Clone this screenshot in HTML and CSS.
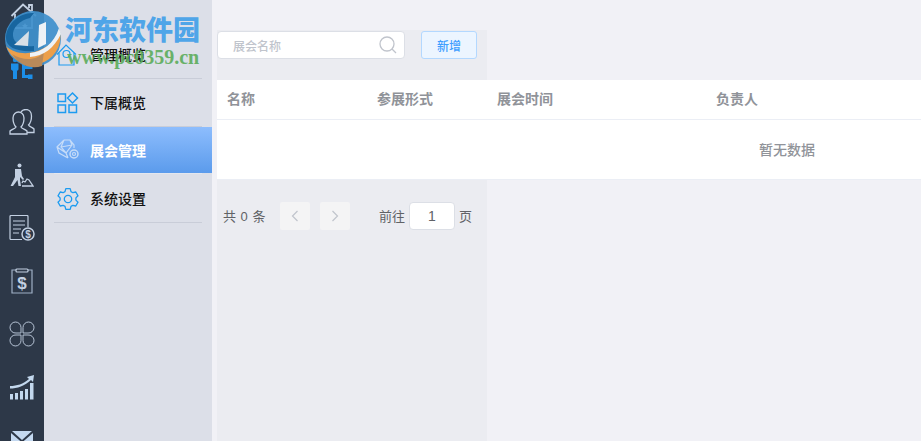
FILE: index.html
```html
<!DOCTYPE html>
<html lang="zh">
<head>
<meta charset="utf-8">
<title>展会管理</title>
<link rel="stylesheet" href="styles.css">
</head>
<body>
<div class="app">
  <nav class="rail">
    <div class="rail-cell"><svg class="home" width="30" height="30" viewBox="0 0 30 30" fill="none" stroke="#c3d0e2" stroke-width="1.800"><path d="M1.500 15 13 3.500 26 15"/><path d="M5 13v14h17V13"/><path d="M19 7V4h3v6"/><path d="m15 22 1 2 2 .2-1.500 1.300.5 2-2-1-2 1 .5-2L12 24.200l2-.2z" fill="#fff" stroke="none"/></svg></div>
    <div class="rail-cell"><svg width="24" height="24" viewBox="0 0 24 24" fill="#1c8ee8"><circle cx="5" cy="3" r="2.200"/><path d="M1 6.500h7.500v6L7 14v8H3v-8l-2-1.500z"/><path d="M12 3h3v6h4v3h-4v6h4v3h-7z"/><rect x="18" y="7.500" width="4.500" height="4.500"/><rect x="18" y="17.500" width="4.500" height="4.500"/><rect x="18" y="1" width="4" height="4"/></svg></div>
    <div class="rail-cell"><svg width="26" height="26" viewBox="0 0 26 26" fill="none" stroke="#c3d0e2" stroke-width="1.300"><path d="M1 25h17v-3c-2-2-5-2-6-4 3-3 3-6 3-9 0-4-3-6-5.500-6S4 5 4 9c0 3 0 6 3 9-1 2-4 2-6 4z"/><path d="M12 3c1-2 3-2.500 5-2.500 3 0 5.500 2.500 5.500 6.500 0 3 0 6-3 9 1 2 4 2 5.500 4v3.500H18"/></svg></div>
    <div class="rail-cell"><svg width="24" height="24" viewBox="0 0 24 24" fill="none" stroke="#c3d0e2" stroke-width="1.300"><circle cx="9.500" cy="2.500" r="2" fill="#c3d0e2" stroke="none"/><path d="M5 6h6l1 7 2 3-1 1-3-3v3l1 6H8.500l-1-6L3 23H.5L5 14z" fill="#c3d0e2" stroke="none"/><path d="M12 23h11l-4-6-2-1-2 3-2-1-1 2"/></svg></div>
    <div class="rail-cell"><svg width="26" height="26" viewBox="0 0 26 26" fill="none" stroke="#c3d0e2" stroke-width="1.200"><path d="M13 24.500H2a1 1 0 0 1-1-1V1.500a1 1 0 0 1 1-1h16a1 1 0 0 1 1 1V12"/><path d="M4 6h12M4 10h12M4 14h8M4 18h6"/><circle cx="19" cy="19" r="6" stroke-width="1.500"/><text class="dollar small" x="19" y="22.500" text-anchor="middle">$</text></svg></div>
    <div class="rail-cell"><svg width="24" height="26" viewBox="0 0 24 26" fill="none" stroke="#9fb0c6" stroke-width="1.200"><path d="M6 2H2v23h20V2h-4"/><rect x="6" y="1" width="12" height="3" rx="1" stroke="#c3d0e2"/><text class="dollar" x="12" y="20.500" text-anchor="middle">$</text></svg></div>
    <div class="rail-cell"><svg width="26" height="26" viewBox="0 0 26 26" fill="none" stroke="#c3d0e2" stroke-width=".9"><path d="M12 12H7a5.500 5.500 0 1 1 5-5.500z"/><path d="M14 12h5a5.500 5.500 0 1 0-5-5.500z"/><path d="M12 14H7a5.500 5.500 0 1 0 5 5.500z"/><path d="M14 14h5a5.500 5.500 0 1 1-5 5.500z"/></svg></div>
    <div class="rail-cell"><svg width="26" height="26" viewBox="0 0 26 26" fill="#c3d8ee"><path d="M1 12c7 0 13-2 19-7l-2-2 7-2-1 7-2-2C16 12 8 14.500 1 14.500z"/><rect x="1" y="20" width="3" height="5.500"/><rect x="6" y="19" width="3" height="6.500"/><rect x="11" y="17" width="3" height="8.500"/><rect x="16" y="15" width="3" height="10.500"/><rect x="21" y="9" width="3.500" height="16.500"/></svg></div>
    <div class="rail-cell"><svg width="22" height="18" viewBox="0 0 22 18"><path fill="#c3d8f0" d="M1 0h20L11 9z"/><path fill="#c3d8f0" d="M0 2v16h22V2L11 11.500z"/></svg></div>
  </nav>

  <aside class="side">
    <a class="side-item">
      <svg width="24" height="24" viewBox="0 0 24 24" fill="none" stroke="#1c9bf0" stroke-width="1.200"><path d="M1 11.500 10 2l10 9.500"/><path d="M3 10v12h15V10"/><circle cx="10.500" cy="11" r="3.500"/></svg>
      <span>管理概览</span>
    </a>
    <a class="side-item">
      <svg width="24" height="24" viewBox="0 0 24 24" fill="none" stroke="#1c9bf0" stroke-width="1.500"><rect x="2" y="3" width="7.500" height="7.500"/><path d="m16.500 2 5 5-5 5-5-5z"/><rect x="2" y="14" width="7.500" height="7.500"/><rect x="13" y="14" width="7.500" height="7.500"/></svg>
      <span>下属概览</span>
    </a>
    <a class="side-item active">
      <svg width="24" height="24" viewBox="0 0 24 24" fill="none" stroke="#c6dcf8" stroke-width="1.200"><path d="M8 2h6l4 5v3M8 2 1 9l2 6 9 5M8 2 5 9l5 6 6-8-2-5M5 9l11-2M1 9l9 6 2 5"/><circle cx="18" cy="16" r="4" stroke-width="1.500"/><circle cx="18" cy="16" r="1.500"/></svg>
      <span>展会管理</span>
    </a>
    <a class="side-item">
      <svg width="24" height="24" viewBox="-12 -12 24 24" fill="none" stroke="#1c9bf0" stroke-width="1.300" stroke-linejoin="round"><path d="M-3-7.400-2.200-10.300 2.200-10.300 3-7.400 4.900-6.300 7.800-7 10-3.200 7.900-1.100 7.900 1.100 10 3.200 7.800 7 4.900 6.300 3 7.400 2.200 10.300-2.200 10.300-3 7.400-4.900 6.300-7.800 7-10 3.200-7.900 1.100-7.900-1.100-10-3.200-7.800-7-4.900-6.300z"/><circle r="3.700"/></svg>
      <span>系统设置</span>
    </a>
  </aside>

  <main class="main">
    <div class="backdrop"></div>
    <div class="toolbar">
      <label class="search">
        <span class="placeholder">展会名称</span>
        <svg width="20" height="20" viewBox="0 0 20 20" fill="none" stroke="#c0c4cc" stroke-width="1.300"><circle cx="9" cy="9" r="7"/><path d="m14 14 4 4"/></svg>
      </label>
      <button class="add">新增</button>
    </div>
    <div class="table">
      <div class="row head">
        <div class="col c1">名称</div>
        <div class="col c2">参展形式</div>
        <div class="col c3">展会时间</div>
        <div class="col c4">负责人</div>
      </div>
      <div class="empty">暂无数据</div>
    </div>
    <div class="pager">
      <span class="total">共 0 条</span>
      <span class="page-btn"><svg width="8" height="12" viewBox="0 0 8 12" fill="none" stroke="#c0c4cc" stroke-width="1.200"><path d="M6.500 1 1.500 6l5 5"/></svg></span>
      <span class="page-btn"><svg width="8" height="12" viewBox="0 0 8 12" fill="none" stroke="#c0c4cc" stroke-width="1.200"><path d="m1.500 1 5 5-5 5"/></svg></span>
      <span class="goto">前往</span>
      <span class="page-input">1</span>
      <span class="page-unit">页</span>
    </div>
  </main>
</div>

<div class="watermark">
  <svg class="wm-logo" width="58" height="58" viewBox="0 0 58 58">
    <circle cx="29" cy="29" r="28" fill="#3f90cc" opacity=".93"/>
    <path d="M2 36C14 48 42 46 56 22A28 28 0 0 1 2 36z" fill="#ec9f4a"/>
    <path d="M8 44C20 52 34 50 40 42L38 56C26 60 14 54 8 44z" fill="#b98a5a"/>
    <path d="M26 43C38 42 50 34 55 18l2 6C50 38 40 46 26 47z" fill="#eef2f6"/>
    <path d="M2 28C2 14 16 2 30 3L26 8C16 10 8 18 9 26 10 34 18 37 30 36V41C14 42 2 38 2 28z" fill="#17659f"/>
    <path d="M10 35 25 21 24 36z" fill="#d8dfe6"/>
    <path d="M35 15 42 12V34L34 38z" fill="#eef2f6"/>
  </svg>
  <div class="wm-cn">河东软件园</div>
  <div class="wm-en">www.pc0359.cn</div>
</div>
</body>
</html>
```

FILE: styles.css
```css
* { box-sizing: border-box; }
html, body { margin: 0; height: 100%; overflow: hidden; }
body {
  font-family: "Liberation Sans", "Noto Sans CJK SC", sans-serif;
  font-size: 14px;
  background: #f1f1f6;
}
.app { display: flex; width: 921px; height: 441px; overflow: hidden; }

.rail {
  flex: 0 0 44px;
  background: #2d3848;
  height: 441px;
  overflow: hidden;
  display: flex;
  flex-direction: column;
}
.rail-cell {
  flex: 0 0 53px;
  display: flex;
  align-items: center;
  justify-content: center;
}
.rail-cell:first-child { margin-top: -11px; }
.rail-cell svg { flex: none; }
.home { margin-left: 6px; }
.dollar { font: bold 17px "Liberation Sans", sans-serif; fill: #c3d0e2; stroke: none; }
.dollar.small { font-size: 10px; }

.side {
  flex: 0 0 168px;
  background: #dcdfe8;
  padding-top: 31px;
}
.side-item {
  display: flex;
  align-items: center;
  gap: 10px;
  height: 48px;
  padding-left: 12px;
  color: #111;
  font-size: 14px;
  font-weight: 500;
  position: relative;
}
.side-item span { padding-bottom: 2px; }
.side-item::after {
  content: "";
  position: absolute;
  left: 10px;
  right: 10px;
  bottom: 0;
  height: 1px;
  background: #c9cdd8;
}
.side-item svg { flex: 0 0 24px; }
.side-item.active {
  color: #fff;
  font-weight: 700;
  background: linear-gradient(#8dbdfd, #5b9bec);
  height: 46px;
  margin-bottom: 2px;
}
.side-item.active span { padding-bottom: 0; }
.side-item.active::after { bottom: -1px; background: #e4e7ee; }

.main { flex: 1; position: relative; padding-left: 5px; min-width: 0; }
.backdrop {
  position: absolute;
  left: 5px;
  top: 30px;
  bottom: 0;
  width: 270px;
  background: #ebecf1;
}
.toolbar {
  position: relative;
  display: flex;
  align-items: flex-start;
  height: 80px;
  padding-top: 31px;
}
.search {
  width: 188px;
  height: 28px;
  background: #fff;
  border: 1px solid #dcdfe6;
  border-radius: 4px;
  display: flex;
  align-items: center;
  justify-content: space-between;
  padding: 0 14px 0 15px;
  color: #c0c4cc;
  font-size: 12px;
  font-weight: 500;
}
.search svg { margin-right: -8px; }
.add {
  margin-left: 16px;
  width: 56px;
  height: 28px;
  border: 1px solid #b3d8ff;
  border-radius: 3px;
  background: #ecf5ff;
  color: #409eff;
  font: 500 12px "Liberation Sans", "Noto Sans CJK SC", sans-serif;
  padding: 0;
}
.table { position: relative; background: #fff; height: 100px; border-bottom: 1px solid #ebeef5; }
.row { display: flex; }
.head { height: 40px; padding-bottom: 3px; border-bottom: 1px solid #ebeef5; color: #909399; font-weight: 700; align-items: center; }
.col { padding-left: 10px; }
.c1 { width: 150px; }
.c2 { width: 120px; }
.c3 { width: 219px; }
.c4 { width: 150px; }
.empty {
  height: 59px;
  display: flex;
  align-items: center;
  justify-content: center;
  color: #909399;
  font-size: 14px;
  font-weight: 500;
  padding: 0 0 2px 436px;
}
.pager {
  position: relative;
  display: flex;
  align-items: center;
  height: 30px;
  margin-top: 21px;
  padding-left: 6px;
  color: #606266;
  font-size: 13px;
}
.total { width: 57px; word-spacing: 1px; padding-bottom: 1px; }
.page-btn {
  width: 30px;
  height: 28px;
  background: #f4f4f5;
  border-radius: 2px;
  display: flex;
  align-items: center;
  justify-content: center;
  margin-right: 10px;
}
.goto { margin-left: 19px; width: 30px; padding-bottom: 1px; }
.page-input {
  width: 46px;
  height: 28px;
  background: #fff;
  border: 1px solid #dcdfe6;
  border-radius: 4px;
  display: flex;
  align-items: center;
  justify-content: center;
  margin-right: 4px;
  font-size: 14px;
}
.page-unit { padding-bottom: 1px; }

.watermark { position: absolute; left: 0; top: 0; width: 210px; height: 70px; }
.wm-logo { position: absolute; left: 4px; top: 10px; }
.wm-cn {
  position: absolute;
  left: 65px;
  top: 11px;
  font: 900 27px "Noto Sans CJK SC", sans-serif;
  line-height: 36px;
  white-space: nowrap;
  color: #4fa5e8;
}
.wm-en {
  position: absolute;
  left: 67px;
  top: 46px;
  font: 700 20px "Liberation Serif", serif;
  line-height: 22px;
  white-space: nowrap;
  color: #5cad5c;
  opacity: .9;
}
```
